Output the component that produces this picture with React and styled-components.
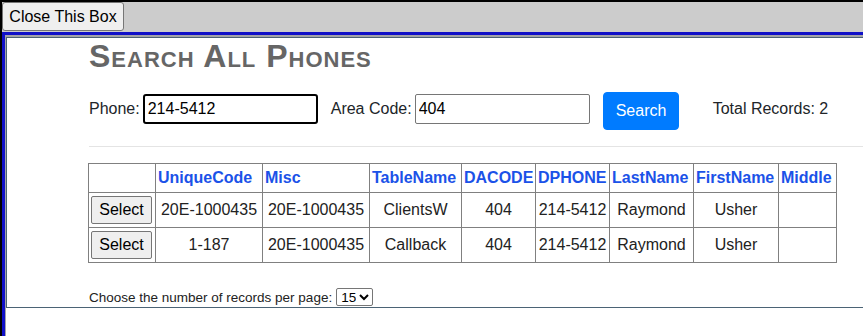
import React, { useState } from 'react';
import styled, { createGlobalStyle } from 'styled-components';

const rows = [
  { id: 1, unique: '20E-1000435', misc: '20E-1000435', table: 'ClientsW', acode: '404', phone: '214-5412', last: 'Raymond', first: 'Usher', middle: '' },
  { id: 2, unique: '1-187', misc: '20E-1000435', table: 'Callback', acode: '404', phone: '214-5412', last: 'Raymond', first: 'Usher', middle: '' },
];

const columns = [
  { key: 'select', label: '', w: 67 },
  { key: 'unique', label: 'UniqueCode', w: 107 },
  { key: 'misc', label: 'Misc', w: 107 },
  { key: 'table', label: 'TableName', w: 92 },
  { key: 'acode', label: 'DACODE', w: 74 },
  { key: 'phone', label: 'DPHONE', w: 74 },
  { key: 'last', label: 'LastName', w: 84 },
  { key: 'first', label: 'FirstName', w: 85 },
  { key: 'middle', label: 'Middle', w: 58 },
];

function App() {
  const [phone, setPhone] = useState('214-5412');
  const [areaCode, setAreaCode] = useState('404');
  const [perPage, setPerPage] = useState('15');

  return (
    <>
      <GlobalStyle />
      <StPage>
        <StTopBar>
          <StCloseButton type="button">Close This Box</StCloseButton>
        </StTopBar>
        <StPanel>
          <StFrame>
            <StContent>
              <StTitle>Search All Phones</StTitle>
              <StFormRow>
                <StField>
                  Phone:
                  <StInput $focused value={phone} onChange={(e) => setPhone(e.target.value)} />
                </StField>
                <StField>
                  Area Code:
                  <StInput value={areaCode} onChange={(e) => setAreaCode(e.target.value)} />
                </StField>
                <StSearchButton type="button">Search</StSearchButton>
                <StTotal>Total Records: 2</StTotal>
              </StFormRow>
              <StRule />
              <StTable>
                <colgroup>
                  {columns.map((col) => (
                    <col key={col.key} style={{ width: col.w }} />
                  ))}
                </colgroup>
                <thead>
                  <tr>
                    {columns.map((col) => (
                      <StTh key={col.key}>{col.label}</StTh>
                    ))}
                  </tr>
                </thead>
                <tbody>
                  {rows.map((row) => (
                    <tr key={row.id}>
                      <StTd>
                        <StSelectButton type="button">Select</StSelectButton>
                      </StTd>
                      <StTd>{row.unique}</StTd>
                      <StTd>{row.misc}</StTd>
                      <StTd>{row.table}</StTd>
                      <StTd>{row.acode}</StTd>
                      <StTd>{row.phone}</StTd>
                      <StTd>{row.last}</StTd>
                      <StTd>{row.first}</StTd>
                      <StTd>{row.middle}</StTd>
                    </tr>
                  ))}
                </tbody>
              </StTable>
              <StFooter>
                Choose the number of records per page:
                <StPerPage value={perPage} onChange={(e) => setPerPage(e.target.value)}>
                  <option value="5">5</option>
                  <option value="10">10</option>
                  <option value="15">15</option>
                  <option value="25">25</option>
                </StPerPage>
              </StFooter>
            </StContent>
          </StFrame>
        </StPanel>
      </StPage>
    </>
  );
}

const GlobalStyle = createGlobalStyle`
  * {
    box-sizing: border-box;
  }
  html, body {
    margin: 0;
    height: 100%;
    overflow: hidden;
  }
  body {
    background: #fff;
    font-family: "Liberation Sans", Arial, Helvetica, sans-serif;
    color: #212529;
  }
`;

const StPage = styled.div`
  display: flex;
  flex-direction: column;
  min-height: 100vh;
  background: #cccccc;
  border-top: 2px solid #000;
  border-left: 2px solid #000;
`;

const StTopBar = styled.div`
  display: flex;
  align-items: flex-start;
  height: 30px;
`;

const StCloseButton = styled.button`
  height: 29px;
  width: 122px;
  padding: 0 6px;
  font: 16px "Liberation Sans", Arial, sans-serif;
  color: #000;
  background: #efefef;
  border: 1px solid #767676;
  border-radius: 3px;
`;

const StPanel = styled.div`
  flex: 1;
  display: flex;
  border-top: 3px solid #1010c8;
  border-left: 3px solid #1010c8;
`;

const StFrame = styled.div`
  flex: 1;
  background: #fff;
  border-top: 2px solid #a3a3a8;
  border-left: 1px solid #a3a3a8;
`;

const StContent = styled.div`
  border: 1px solid #4b6375;
  border-right: none;
  padding: 0 0 1px 82px;
`;

const StTitle = styled.h1`
  margin: 0;
  font-size: 32px;
  line-height: 36px;
  letter-spacing: 1px;
  font-weight: bold;
  font-variant: small-caps;
  color: #666;
`;

const StFormRow = styled.div`
  display: flex;
  align-items: flex-start;
  gap: 13px;
  height: 38px;
  margin-top: 18px;
  font-size: 16px;
`;

const StField = styled.label`
  display: flex;
  align-items: center;
  gap: 3px;
  margin-top: 2px;
`;

const StInput = styled.input`
  width: 175px;
  height: 30px;
  padding: 0 3px;
  font: 16px "Liberation Sans", Arial, sans-serif;
  color: #000;
  border: ${(p) => (p.$focused ? '2px solid #000' : '1px solid #767676')};
  border-radius: ${(p) => (p.$focused ? '3px' : '2px')};
  outline: none;
`;

const StSearchButton = styled.button`
  height: 38px;
  width: 76px;
  padding: 6px 12px;
  font: 16px "Liberation Sans", Arial, sans-serif;
  color: #fff;
  background: #007bff;
  border: 1px solid #007bff;
  border-radius: 4px;
`;

const StTotal = styled.span`
  margin: 2px 0 0 21px;
  line-height: 30px;
`;

const StRule = styled.hr`
  margin: 16px 0;
  border: 0;
  border-top: 1px solid #e4e4e4;
`;

const StTable = styled.table`
  table-layout: fixed;
  width: 749px;
  margin-left: -1px;
  border-collapse: collapse;
  font-size: 16px;
`;

const StTh = styled.th`
  height: 29px;
  padding: 2px 2px;
  text-align: left;
  font-weight: bold;
  color: #1b52e8;
  border: 1px solid #808080;
  white-space: nowrap;
  overflow: hidden;
`;

const StTd = styled.td`
  height: 35px;
  padding: 2px 2px;
  text-align: center;
  color: #222;
  border: 1px solid #808080;
  white-space: nowrap;
`;

const StSelectButton = styled.button`
  display: block;
  width: 61px;
  height: 28px;
  padding: 0 6px;
  font: 16px "Liberation Sans", Arial, sans-serif;
  color: #000;
  background: #efefef;
  border: 1px solid #767676;
  border-radius: 2px;
`;

const StFooter = styled.div`
  display: flex;
  align-items: center;
  gap: 4px;
  height: 18px;
  margin-top: 25px;
  font-size: 13.5px;
  color: #222;
`;

const StPerPage = styled.select`
  height: 18px;
  width: 37px;
  font: 13.5px "Liberation Sans", Arial, sans-serif;
  border: 1px solid #767676;
  border-radius: 2px;
  background: #fff;
  color: #000;
`;

export default App;
